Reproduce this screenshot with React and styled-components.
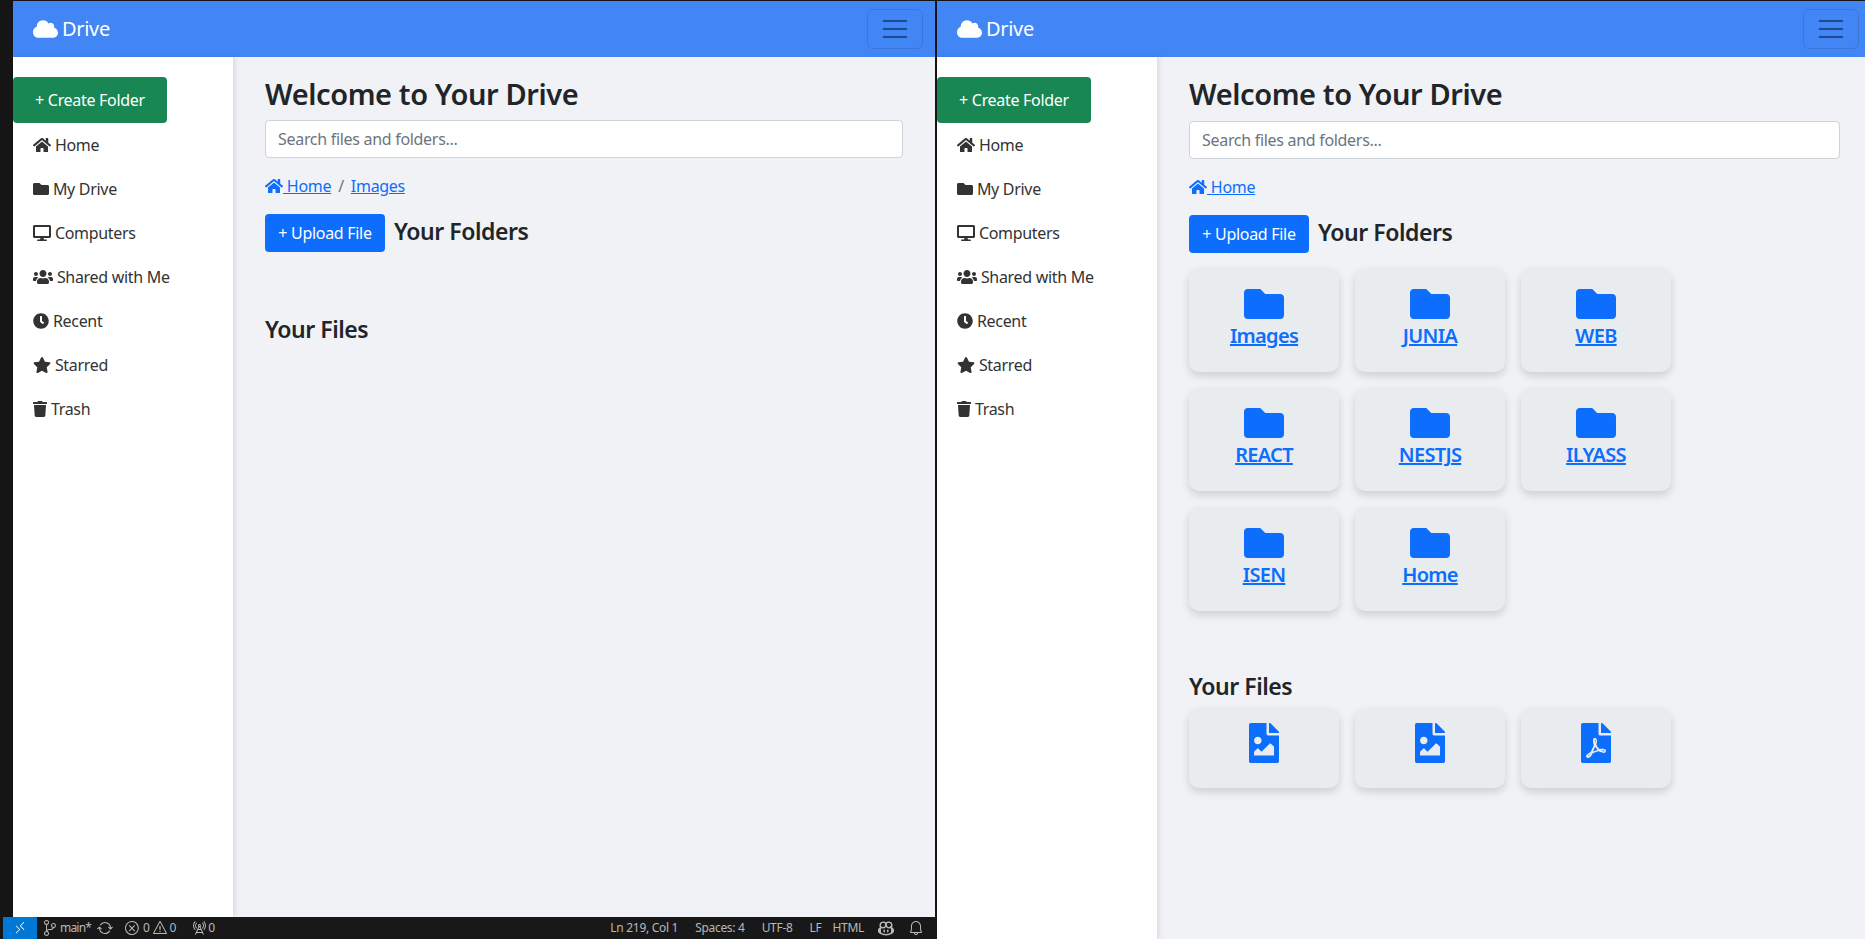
import styled, { createGlobalStyle } from "styled-components";
import { FaCloud, FaHome, FaFolder, FaDesktop, FaUsers, FaClock, FaStar, FaTrash, FaFileImage, FaFilePdf } from "react-icons/fa";
import { VscRemote, VscSourceControl, VscSync, VscError, VscWarning, VscRadioTower, VscCopilot, VscBell } from "react-icons/vsc";

const Global = createGlobalStyle`
  * { box-sizing: border-box; }
  html, body { margin: 0; height: 100%; overflow: hidden; background: #111; }
  body { font-family: "Noto Sans", "Open Sans", sans-serif; font-size: 16px; line-height: 1.5; color: #212529; }
`

const Screen = styled.div`
  display: flex;
  width: 1865px;
  height: 939px;
  padding-top: 1px;
  background: #151515;
  overflow: hidden;
`
const LeftColumn = styled.div`
  width: 937px;
  flex: none;
  display: flex;
  flex-direction: column;
`
const EditorRow = styled.div`
  flex: 1;
  min-height: 0;
  display: flex;
  padding-left: 13px;
  padding-right: 2px;
`
const PaneWrap = styled.div`
  flex: 1;
  min-width: 0;
  display: flex;
  flex-direction: column;
  overflow: hidden;
  background: #f0f2f5;
`
const Navbar = styled.nav`
  height: 56px;
  flex: none;
  display: flex;
  align-items: center;
  justify-content: space-between;
  padding: 0 ${p => p.$right}px 0 20px;
  background: #4285f4;
`
const Brand = styled.div`
  display: flex;
  align-items: center;
  gap: 4px;
  color: #fff;
  font-size: 20px;
  letter-spacing: -0.3px;
  svg { height: 20px; width: 25px; }
`
const Toggler = styled.button`
  width: 56px;
  height: 40px;
  padding: 0;
  display: flex;
  align-items: center;
  justify-content: center;
  background: transparent;
  border: 1px solid rgba(0, 0, 0, 0.1);
  border-radius: 6px;
`
const Body = styled.div`
  flex: 1;
  min-height: 0;
  display: flex;
`
const Sidebar = styled.aside`
  width: 220px;
  flex: none;
  padding-top: 20px;
  background: #fff;
  box-shadow: 2px 0 5px rgba(0, 0, 0, 0.1);
`
const CreateButton = styled.button`
  display: block;
  width: 154px;
  height: 46px;
  padding: 0;
  border: 0;
  border-radius: 4px;
  background: #198754;
  color: #fff;
  font: inherit;
  letter-spacing: -0.3px;
`
const SideLink = styled.a`
  display: block;
  height: 44px;
  padding: 10px 20px;
  color: #333;
  letter-spacing: -0.3px;
  svg { height: 16px; width: ${p => p.$iconWidth}px; vertical-align: -0.125em; }
`
const Main = styled.main`
  flex: 1;
  min-width: 0;
  padding: 20px ${p => p.$right}px 0 32px;
`
const Title = styled.h2`
  margin: 0 0 ${p => p.$gap}px;
  font-size: 29px;
  line-height: 34px;
  font-weight: 600;
  letter-spacing: -0.4px;
`
const SearchInput = styled.input`
  display: block;
  width: 100%;
  height: 38px;
  margin-bottom: 16px;
  padding: 6px 12px;
  font: inherit;
  letter-spacing: -0.3px;
  color: #212529;
  background: #fff;
  border: 1px solid #ced4da;
  border-radius: 4px;
  &::placeholder { color: #6c757d; opacity: 1; }
`
const Crumbs = styled.div`
  display: flex;
  height: 24px;
  margin-bottom: 16px;
  letter-spacing: -0.3px;
`
const CrumbLink = styled.a`
  color: #0d6efd;
  text-decoration: underline;
  svg { height: 16px; width: 18px; vertical-align: -0.125em; }
`
const CrumbSlash = styled.span`
  padding: 0 7px;
  color: #6c757d;
`
const UploadRow = styled.div`
  display: flex;
  align-items: center;
  gap: 9px;
  height: 38px;
`
const UploadButton = styled.button`
  width: 120px;
  height: 38px;
  padding: 0;
  border: 0;
  border-radius: 4px;
  background: #0d6efd;
  color: #fff;
  font: inherit;
  letter-spacing: -0.3px;
`
const SectionTitle = styled.h3`
  margin: 0 0 3px;
  font-size: 23px;
  line-height: 29px;
  font-weight: 600;
  letter-spacing: -0.45px;
`
const FilesTitle = styled(SectionTitle)`
  margin: ${p => p.$top}px 0 0;
`
const CardGrid = styled.div`
  display: grid;
  grid-template-columns: repeat(3, 150px);
  gap: 16px;
  margin-top: ${p => p.$top}px;
`
const Card = styled.div`
  height: ${p => p.$height}px;
  padding-top: 15.5px;
  display: flex;
  flex-direction: column;
  align-items: center;
  background: #e9ecef;
  border-radius: 10px;
  box-shadow: 0 4px 8px rgba(0, 0, 0, 0.15);
  color: #0d6efd;
`
const CardLabel = styled.a`
  margin-top: -3px;
  font-size: 20px;
  line-height: 30px;
  font-weight: 600;
  letter-spacing: -0.7px;
  color: #0d6efd;
  text-decoration: underline;
`
const StatusBar = styled.footer`
  height: 22px;
  flex: none;
  display: flex;
  align-items: center;
  margin-left: 3px;
  padding-right: 13px;
  background: #181818;
  color: #b8b8b8;
  font-size: 12px;
  letter-spacing: -0.3px;
`
const RemoteTab = styled.div`
  width: 34px;
  height: 100%;
  display: flex;
  align-items: center;
  justify-content: center;
  background: #0078d4;
  color: #fff;
`
const StatusGroup = styled.div`
  display: flex;
  align-items: center;
  gap: ${p => p.$gap}px;
  margin-left: ${p => p.$left}px;
`
const RightGroups = styled.div`
  display: flex;
  align-items: center;
  margin-left: auto;
`
const StatusItem = styled.span`
  display: flex;
  align-items: center;
  gap: ${p => p.$gap}px;
`
const BranchName = styled.span`
  width: 31px;
  letter-spacing: -0.8px;
`

const sideItems = [
  [FaHome, "Home", 18],
  [FaFolder, "My Drive", 16],
  [FaDesktop, "Computers", 18],
  [FaUsers, "Shared with Me", 20],
  [FaClock, "Recent", 16],
  [FaStar, "Starred", 18],
  [FaTrash, "Trash", 14],
];
const folders = ["Images", "JUNIA", "WEB", "REACT", "NESTJS", "ILYASS", "ISEN", "Home"];
const files = [FaFileImage, FaFileImage, FaFilePdf];

const Hamburger = () => (
  <svg width="30" height="30" viewBox="0 0 30 30">
    <path d="M3 7h24M3 15h24M3 23h24" stroke="#1f4a8f" strokeWidth="2" />
  </svg>
);

const DrivePane = ({ navRight, mainRight, titleGap, crumbs, children }) => (
  <PaneWrap>
    <Navbar $right={navRight}>
      <Brand><FaCloud /> Drive</Brand>
      <Toggler><Hamburger /></Toggler>
    </Navbar>
    <Body>
      <Sidebar>
        <CreateButton>+ Create Folder</CreateButton>
        {sideItems.map(([Icon, label, width]) => (
          <SideLink key={label} $iconWidth={width}><Icon /> {label}</SideLink>
        ))}
      </Sidebar>
      <Main $right={mainRight}>
        <Title $gap={titleGap}>Welcome to Your Drive</Title>
        <SearchInput placeholder="Search files and folders..." />
        <Crumbs>
          <CrumbLink><FaHome /> Home</CrumbLink>
          {crumbs.map(c => (
            <span key={c}><CrumbSlash>/</CrumbSlash><CrumbLink>{c}</CrumbLink></span>
          ))}
        </Crumbs>
        <UploadRow>
          <UploadButton>+ Upload File</UploadButton>
          <SectionTitle>Your Folders</SectionTitle>
        </UploadRow>
        {children}
      </Main>
    </Body>
  </PaneWrap>
);

const App = () => (
  <Screen>
    <Global />
    <LeftColumn>
      <EditorRow>
        <DrivePane navRight={12} mainRight={32} titleGap={9} crumbs={["Images"]}>
          <FilesTitle $top={63}>Your Files</FilesTitle>
        </DrivePane>
      </EditorRow>
      <StatusBar>
        <RemoteTab><VscRemote size={14} /></RemoteTab>
        <StatusGroup $left={5} $gap={6}>
          <StatusItem $gap={2}><VscSourceControl size={16} /><BranchName>main*</BranchName></StatusItem>
          <VscSync size={16} />
        </StatusGroup>
        <StatusGroup $left={11} $gap={2}>
          <StatusItem $gap={3}><VscError size={16} />0</StatusItem>
          <StatusItem $gap={2}><VscWarning size={16} />0</StatusItem>
        </StatusGroup>
        <StatusGroup $left={15} $gap={0}>
          <StatusItem $gap={1}><VscRadioTower size={16} />0</StatusItem>
        </StatusGroup>
        <RightGroups>
          <StatusGroup $left={0} $gap={17}>
            <span>Ln 219, Col 1</span>
            <span>Spaces: 4</span>
            <span>UTF-8</span>
            <span>LF</span>
          </StatusGroup>
          <StatusGroup $left={11} $gap={14}>
            <span>HTML</span>
            <VscCopilot size={16} />
            <VscBell size={16} />
          </StatusGroup>
        </RightGroups>
      </StatusBar>
    </LeftColumn>
    <DrivePane navRight={6} mainRight={25} titleGap={10} crumbs={[]}>
      <CardGrid $top={15}>
        {folders.map(name => (
          <Card key={name} $height={103.5}>
            <FaFolder size={40} />
            <CardLabel>{name}</CardLabel>
          </Card>
        ))}
      </CardGrid>
      <FilesTitle $top={61}>Your Files</FilesTitle>
      <CardGrid $top={7}>
        {files.map((Icon, i) => (
          <Card key={i} $height={80}>
            <Icon size={40} />
          </Card>
        ))}
      </CardGrid>
    </DrivePane>
  </Screen>
);

export default App;
